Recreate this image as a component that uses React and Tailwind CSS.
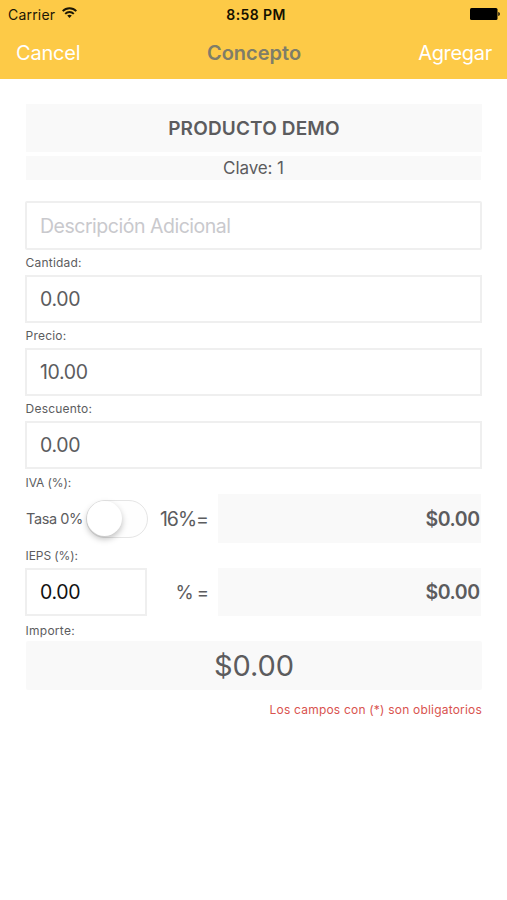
import { useState } from "react";

function Field({ label, value, onChange }) {
    return (
        <label className="block">
            <span className="flex h-[25px] items-center pl-[0.6px] pt-px text-[12px] leading-none tracking-[0.2px]">{label}</span>
            <input
                type="text"
                value={value}
                onChange={(e) => onChange(e.target.value)}
                className="block h-12 w-full border-2 border-[#efefef] bg-white px-[13px] text-[19.5px] tracking-[-0.35px] outline-none"
            />
        </label>
    );
}

function StatusBar() {
    return (
        <div className="flex h-7 items-center justify-between pl-2 pr-[7px] text-[14px] text-[#1c1705]">
            <div className="flex w-40 items-center gap-[7px]">
                <span className="tracking-[0.2px]">Carrier</span>
                <svg className="mb-[3px]" width="15" height="11" viewBox="0 0 15 11" fill="none" stroke="currentColor" strokeWidth="1.9">
                    <path d="M0.7 4.1C4.5 0.2 10.5 0.2 14.3 4.1" />
                    <path d="M3.2 6.8C5.6 4.3 9.4 4.3 11.8 6.8" />
                    <path d="M7.5 11L5.2 8.6C6.5 7.4 8.5 7.4 9.8 8.6Z" fill="currentColor" stroke="none" />
                </svg>
            </div>
            <span className="whitespace-nowrap pl-1 text-[14px] font-semibold tracking-[0.4px] text-[#151000]">8:58 PM</span>
            <div className="flex w-40 justify-end">
                <svg className="mb-px" width="30" height="12" viewBox="0 0 30 12" fill="#000">
                    <rect x="0" y="0" width="27.5" height="12" rx="1.5" />
                    <path d="M28.3 4C29.3 4.3 29.8 5 29.8 6C29.8 7 29.3 7.7 28.3 8Z" />
                </svg>
            </div>
        </div>
    );
}

export default function App() {
    const [descripcion, setDescripcion] = useState("");
    const [cantidad, setCantidad] = useState("0.00");
    const [precio, setPrecio] = useState("10.00");
    const [descuento, setDescuento] = useState("0.00");
    const [ieps, setIeps] = useState("0.00");
    const [tasaCero, setTasaCero] = useState(false);

    return (
        <div className="min-h-screen bg-white font-['Inter',sans-serif] text-[#5c5c5e]">
            <header className="h-[79px] bg-[#fdca47]">
                <StatusBar />
                <nav className="grid h-[49px] grid-cols-3 items-center pl-4 pr-[15px] text-[20px] text-white">
                    <button className="text-left tracking-[-0.2px]">Cancel</button>
                    <h1 className="text-center font-semibold tracking-[0px] text-[#7f7d68]">Concepto</h1>
                    <button className="text-right tracking-[-0.3px]">Agregar</button>
                </nav>
            </header>

            <main className="px-[25px] pt-[25px]">
                <div className="ml-px flex h-12 items-center justify-center bg-[#f9f9f9] pt-px text-[19px] leading-none font-semibold tracking-[0.15px]">PRODUCTO DEMO</div>
                <div className="mx-px mt-1 flex h-6 items-center justify-center bg-[#f9f9f9] pt-[2px] text-[17px] tracking-[-0.1px]">Clave: 1</div>

                <input
                    type="text"
                    placeholder="Descripción Adicional"
                    value={descripcion}
                    onChange={(e) => setDescripcion(e.target.value)}
                    className="mt-[21px] block h-[49px] w-full rounded-[2px] border-2 border-[#efefef] px-[13px] text-[19.5px] tracking-[-0.48px] outline-none placeholder:text-[#c9c9cd]"
                />

                <Field label="Cantidad:" value={cantidad} onChange={setCantidad} />
                <Field label="Precio:" value={precio} onChange={setPrecio} />
                <Field label="Descuento:" value={descuento} onChange={setDescuento} />

                <div className="flex h-[25px] items-center pl-[0.6px] pt-[3px] text-[12px] leading-none tracking-[-0.1px]">IVA (%):</div>
                <div className="flex h-[49px] items-center">
                    <span className="ml-px w-[60px] whitespace-nowrap pt-px text-[14.5px] tracking-[-0.4px]">Tasa 0%</span>
                    <button
                        role="switch"
                        aria-checked={tasaCero}
                        onClick={() => setTasaCero(!tasaCero)}
                        className={`mt-px flex h-[38px] w-[62px] rounded-full border-[1.5px] border-[#e5e5e5] ${tasaCero ? "justify-end bg-[#4cd964]" : "bg-[#fefefe]"}`}
                    >
                        <span className="size-[35px] rounded-full bg-white shadow-[0_3px_6px_rgba(0,0,0,0.25)]"></span>
                    </button>
                    <span className="w-[60px] pt-[3px] text-right text-[19.5px] tracking-[-1px]">16%=</span>
                    <div className="ml-[10px] mr-px flex h-full flex-1 items-center justify-end bg-[#f9f9f9] pr-[1.5px] pt-[3px] text-[19.5px] font-semibold tracking-[-0.5px]">$0.00</div>
                </div>

                <div className="flex h-[25px] items-center pl-[0.6px] pt-px text-[12px] leading-none tracking-[-0.1px]">IEPS (%):</div>
                <div className="flex h-12 items-center">
                    <input
                        type="text"
                        value={ieps}
                        onChange={(e) => setIeps(e.target.value)}
                        className="h-full w-[122px] border-2 border-[#efefef] px-[13px] text-[19.5px] tracking-[-0.35px] text-[#111] outline-none"
                    />
                    <span className="w-[61px] pt-[2px] text-right text-[18.5px] tracking-[-1px]">% =</span>
                    <div className="ml-[10px] mr-px flex h-full flex-1 items-center justify-end bg-[#f9f9f9] pr-[1.5px] pt-[2px] text-[19.5px] font-semibold tracking-[-0.5px]">$0.00</div>
                </div>

                <div className="flex h-[25px] items-center pl-[0.6px] pt-[4px] text-[12px] leading-none tracking-[0.25px]">Importe:</div>
                <div className="ml-px flex h-[49px] items-center justify-center rounded-[2px] bg-[#f9f9f9] text-[29px] tracking-[-0.1px]">$0.00</div>
                <p className="mt-3 text-right text-[12px] leading-4 tracking-[0.2px] text-[#d9534f]">Los campos con (*) son obligatorios</p>
            </main>
        </div>
    );
}
